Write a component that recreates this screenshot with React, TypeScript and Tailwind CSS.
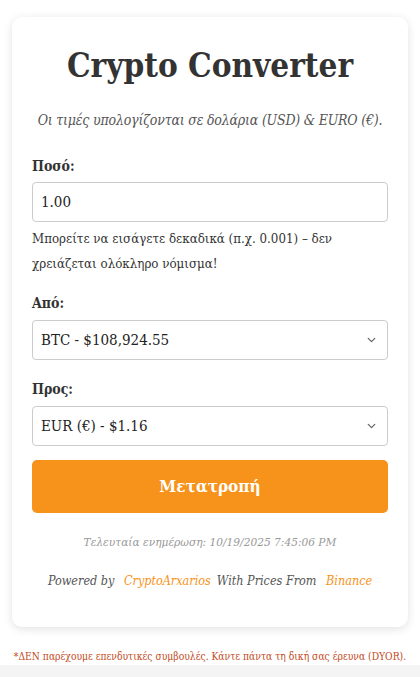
import { ChevronDown } from 'lucide-react';

const font = { fontFamily: '"DejaVu Serif Condensed", "DejaVu Serif", serif', fontStretch: 'condensed' };

function Select({ value }: { value: string }) {
  return (
    <div className="relative flex h-10 items-center rounded border border-[#ccc] bg-white px-2 text-[15px] text-[#222]">
      <span>{value}</span>
      <ChevronDown className="absolute right-[9px] top-1/2 h-[13px] w-[13px] -translate-y-1/2 text-[#666]" strokeWidth={2.4} />
    </div>
  );
}

export default function App() {
  return (
    <div className="min-h-[677px] bg-[#f4f4f4]" style={font}>
      <div className="bg-white px-3 pt-[17px]">
        <div className="rounded-[10px] bg-white px-5 pt-[27px] pb-[37px] shadow-[0_2px_10px_rgba(0,0,0,0.12)]">
          <h1 className="text-center text-[33px] font-bold leading-[44px] text-[#333]">Crypto Converter</h1>
          <p className="mt-[22px] text-center text-[14px] italic tracking-[-0.2px] text-[#555]">
            Οι τιμές υπολογίζονται σε δολάρια (USD) &amp; EURO (€).
          </p>

          <div className="mt-[25px] text-[14px] font-bold text-[#333]">Ποσό:</div>
          <div className="mt-[5px] flex h-10 items-center rounded border border-[#ccc] px-2 text-[15px] text-[#222]">1.00</div>
          <p className="mt-[4px] text-[13.2px] leading-[25px] text-[#333]">
            Μπορείτε να εισάγετε δεκαδικά (π.χ. 0.001) – δεν χρειάζεται ολόκληρο νόμισμα!
          </p>

          <div className="mt-[17px] text-[14px] font-bold text-[#333]">Από:</div>
          <div className="mt-[6px]">
            <Select value="BTC - $108,924.55" />
          </div>

          <div className="mt-[19px] text-[14px] font-bold text-[#333]">Προς:</div>
          <div className="mt-[6px]">
            <Select value="EUR (€) - $1.16" />
          </div>

          <button className="mt-[14px] flex h-[53px] w-full items-center justify-center rounded-[5px] bg-[#f7931a] text-[17px] font-bold text-white">
            Μετατροπή
          </button>

          <p className="mt-[21px] text-center text-[11.8px] italic text-[#999]">
            Τελευταία ενημέρωση: 10/19/2025 7:45:06 PM
          </p>
          <p className="mt-[20px] text-center text-[12.5px] italic text-[#555]">
            Powered by <span className="ml-1.5 text-[#f7931a]">CryptoArxarios</span>
            <span className="ml-1.5">With Prices From</span> <span className="ml-1.5 text-[#f7931a]">Binance</span>
          </p>
        </div>
        <p className="-mx-2 mt-[21px] whitespace-nowrap pb-[1px] text-center text-[10.25px] leading-[16px] text-[#bf4a1c]">
          *ΔΕΝ παρέχουμε επενδυτικές συμβουλές. Κάντε πάντα τη δική σας έρευνα (DYOR).
        </p>
      </div>
    </div>
  );
}
